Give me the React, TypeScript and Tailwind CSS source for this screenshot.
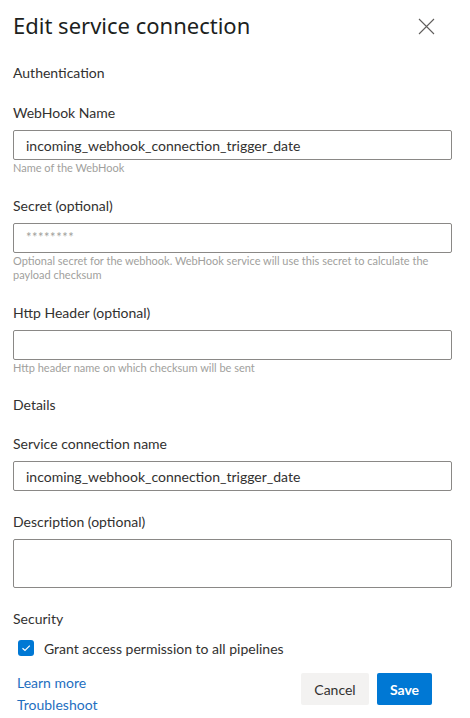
const font = { fontFamily: '"Segoe UI", Lato, "Noto Sans", sans-serif' };
const titleFont = { fontFamily: '"Segoe UI", "Noto Sans", sans-serif' };

type FieldProps = {
  label: string;
  value?: string;
  placeholder?: string;
  helper?: string;
  tall?: boolean;
};

const Field = ({ label, value, placeholder, helper, tall }: FieldProps) => (
  <div className="flex flex-col">
    <label className="text-[14px] leading-[20px] text-[#323130]">{label}</label>
    <div
      className={`mt-[7px] border border-[#8a8886] rounded-[2px] px-[12px] flex ${
        tall ? "h-[49px] items-start pt-[5px]" : "h-[30px] items-center"
      }`}
    >
      {value && <span className="text-[14px] text-[#323130]">{value}</span>}
      {placeholder && <span className="text-[13px] text-[#a19f9d] tracking-[0.5px]">{placeholder}</span>}
    </div>
    {helper && (
      <p className="mt-[1px] text-[11px] leading-[14px] text-[#a19f9d]">{helper}</p>
    )}
  </div>
);

const Section = ({ title }: { title: string }) => (
  <p className="text-[14px] leading-[20px] text-[#323130]">{title}</p>
);

export default function App() {
  return (
    <div className="w-[470px] h-[718px] bg-white overflow-hidden" style={font}>
      <div className="pl-[13px] pr-[18px]">
        <div className="flex items-center justify-between pt-[11px] h-[39px]">
          <h1 className="text-[22px] leading-[28px] font-normal text-[#201f1e]" style={titleFont}>
            Edit service connection
          </h1>
          <svg width="17" height="17" viewBox="0 0 17 17" className="mr-[17px] mt-[2px]">
            <path d="M1 1 L16 16 M16 1 L1 16" stroke="#605e5c" strokeWidth="1.1" fill="none" />
          </svg>
        </div>

        <div className="mt-[24px]">
          <Section title="Authentication" />
        </div>
        <div className="mt-[20px]">
          <Field
            label="WebHook Name"
            value="incoming_webhook_connection_trigger_date"
            helper="Name of the WebHook"
          />
        </div>
        <div className="mt-[21px]">
          <Field
            label="Secret (optional)"
            placeholder="********"
            helper="Optional secret for the webhook. WebHook service will use this secret to calculate the payload checksum"
          />
        </div>
        <div className="mt-[21px]">
          <Field
            label="Http Header (optional)"
            helper="Http header name on which checksum will be sent"
          />
        </div>
        <div className="mt-[20px]">
          <Section title="Details" />
        </div>
        <div className="mt-[19px]">
          <Field label="Service connection name" value="incoming_webhook_connection_trigger_date" />
        </div>
        <div className="mt-[21px]">
          <Field label="Description (optional)" tall />
        </div>
        <div className="mt-[21px]">
          <Section title="Security" />
        </div>
        <div className="mt-[9px] flex items-center h-[20px] pl-[5px]">
          <span className="w-[16px] h-[16px] rounded-[3px] bg-[#0078d4] flex items-center justify-center">
            <svg width="10" height="10" viewBox="0 0 10 10">
              <path d="M1.5 5.2 L4 7.5 L8.8 2.6" stroke="white" strokeWidth="1.2" fill="none" />
            </svg>
          </span>
          <span className="ml-[10px] text-[14px] text-[#323130]">
            Grant access permission to all pipelines
          </span>
        </div>

        <div className="mt-[14px] flex justify-between">
          <div className="flex flex-col pl-[4px] text-[14px] leading-[22px] text-[#1f6fbf]">
            <span>Learn more</span>
            <span>Troubleshoot</span>
          </div>
          <div className="flex gap-[8px] mt-[1px] mr-[20px]">
            <button className="h-[32px] w-[68px] rounded-[2px] bg-[#f3f2f1] text-[14px] text-[#323130]">
              Cancel
            </button>
            <button className="h-[32px] w-[55px] rounded-[2px] bg-[#0078d4] text-[14px] font-bold text-white">
              Save
            </button>
          </div>
        </div>
      </div>
    </div>
  );
}
